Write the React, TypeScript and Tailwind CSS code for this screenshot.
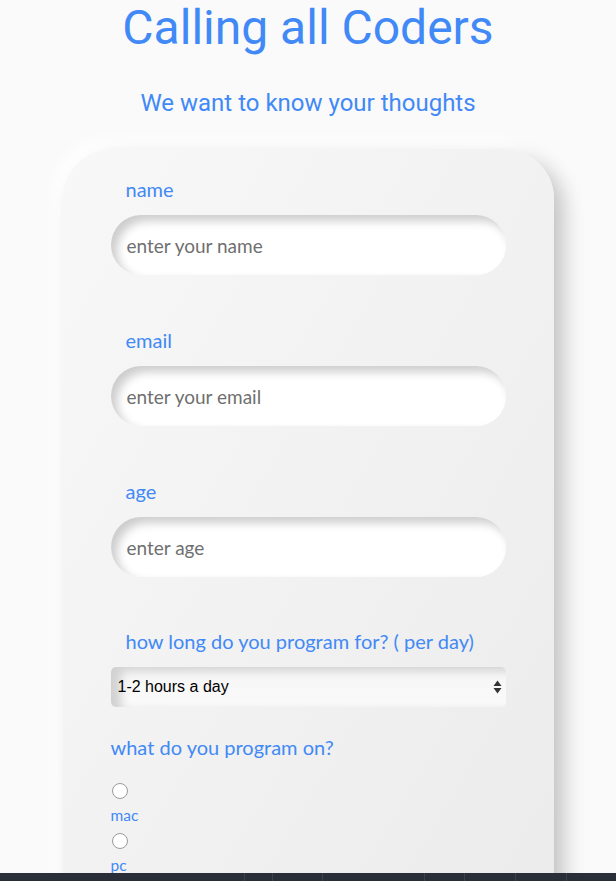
import React, { useState } from 'react';

const labelFont = { fontFamily: 'Lato, "Noto Sans", sans-serif' };

const App = () => {
  const [form, setForm] = useState({ name: '', email: '', age: '', hours: '1-2', device: '' });

  const handleChange = (e: React.ChangeEvent<HTMLInputElement | HTMLSelectElement>) => {
    setForm({ ...form, [e.target.name]: e.target.value });
  };

  const inputClass =
    'block w-full h-[60px] rounded-full bg-white px-4 text-[19px] text-gray-700 placeholder:text-[#6f6f6f] outline-none shadow-[inset_6px_6px_10px_#cdcdcd,inset_-4px_-4px_8px_#ffffff]';

  return (
    <div className="min-h-screen bg-[#fafafa] font-['Roboto',sans-serif] pb-16">
      {/* Header */}
      <h1 className="text-center text-[48px] leading-[56px] text-[#4189f6]">Calling all Coders</h1>
      <p className="mt-[31px] text-center text-[24px] leading-[32px] text-[#4189f6]">We want to know your thoughts</p>

      {/* Form card */}
      <form
        className="mx-auto mt-[30px] w-[491px] rounded-[50px] bg-gradient-to-br from-[#f8f8f8] to-[#ebebeb] px-12 pt-[26px] pb-24 shadow-[10px_10px_20px_#c4c4c4,-8px_-8px_16px_#ffffff]"
        style={labelFont}
      >
        {/* Name */}
        <label className="block pl-[15px] text-[20px] leading-[28px] text-[#4189f6]">name</label>
        <input name="name" value={form.name} onChange={handleChange} placeholder="enter your name" className={`mt-3 ${inputClass}`} />

        {/* Email */}
        <label className="mt-[51px] block pl-[15px] text-[20px] leading-[28px] text-[#4189f6]">email</label>
        <input name="email" value={form.email} onChange={handleChange} placeholder="enter your email" className={`mt-3 ${inputClass}`} />

        {/* Age */}
        <label className="mt-[51px] block pl-[15px] text-[20px] leading-[28px] text-[#4189f6]">age</label>
        <input name="age" value={form.age} onChange={handleChange} placeholder="enter age" className={`mt-3 ${inputClass}`} />

        {/* Hours */}
        <label className="mt-[50px] block pl-[15px] text-[20px] leading-[28px] text-[#4189f6]">how long do you program for? ( per day)</label>
        <div className="relative mt-3">
          <select
            name="hours"
            value={form.hours}
            onChange={handleChange}
            className="block h-10 w-full appearance-none rounded-[5px] bg-gradient-to-b from-[#f6f6f6] to-[#fafafa] pl-[7px] text-[16px] text-black outline-none shadow-[inset_10px_4px_10px_#d2d2d2] font-['Liberation_Sans',Arial,sans-serif]"
          >
            <option value="1-2">1-2 hours a day</option>
            <option value="3-4">3-4 hours a day</option>
            <option value="5+">5+ hours a day</option>
          </select>
          <svg className="pointer-events-none absolute right-[4px] top-[13px]" width="9" height="14" viewBox="0 0 9 14">
            <path d="M4.5 0.5 L8.5 6 L0.5 6 Z" fill="#333" />
            <path d="M4.5 13.5 L8.5 8 L0.5 8 Z" fill="#333" />
          </svg>
        </div>

        {/* Device */}
        <p className="mt-[26px] text-[20px] leading-[28px] text-[#4189f6]">what do you program on?</p>
        <div className="mt-[22px] flex flex-col items-start">
          <input type="radio" name="device" value="mac" checked={form.device === 'mac'} onChange={handleChange} className="ml-px h-4 w-4 appearance-none rounded-full border border-[#9a9a9a] bg-white" />
          <span className="mt-[6px] text-[15.5px] leading-[20px] text-[#4189f6]">mac</span>
          <input type="radio" name="device" value="pc" checked={form.device === 'pc'} onChange={handleChange} className="ml-px mt-[8px] h-4 w-4 appearance-none rounded-full border border-[#9a9a9a] bg-white" />
          <span className="mt-[6px] text-[15.5px] leading-[20px] text-[#4189f6]">pc</span>
        </div>
      </form>

      {/* Bottom bar */}
      <div className="fixed bottom-0 left-0 right-0 flex h-2 bg-[#2a2e38]">
        <div className="w-[244px]" />
        <div className="w-[28px] border-l border-[#3c414c]" />
        <div className="w-[50px] border-l border-[#3c414c]" />
        <div className="w-[102px] border-l border-[#3c414c]" />
        <div className="w-[40px] border-l border-[#3c414c]" />
        <div className="w-[51px] border-l border-[#3c414c]" />
        <div className="w-[51px] border-l border-[#3c414c]" />
        <div className="flex-1 border-l border-[#3c414c]" />
      </div>
    </div>
  );
};

export default App;
